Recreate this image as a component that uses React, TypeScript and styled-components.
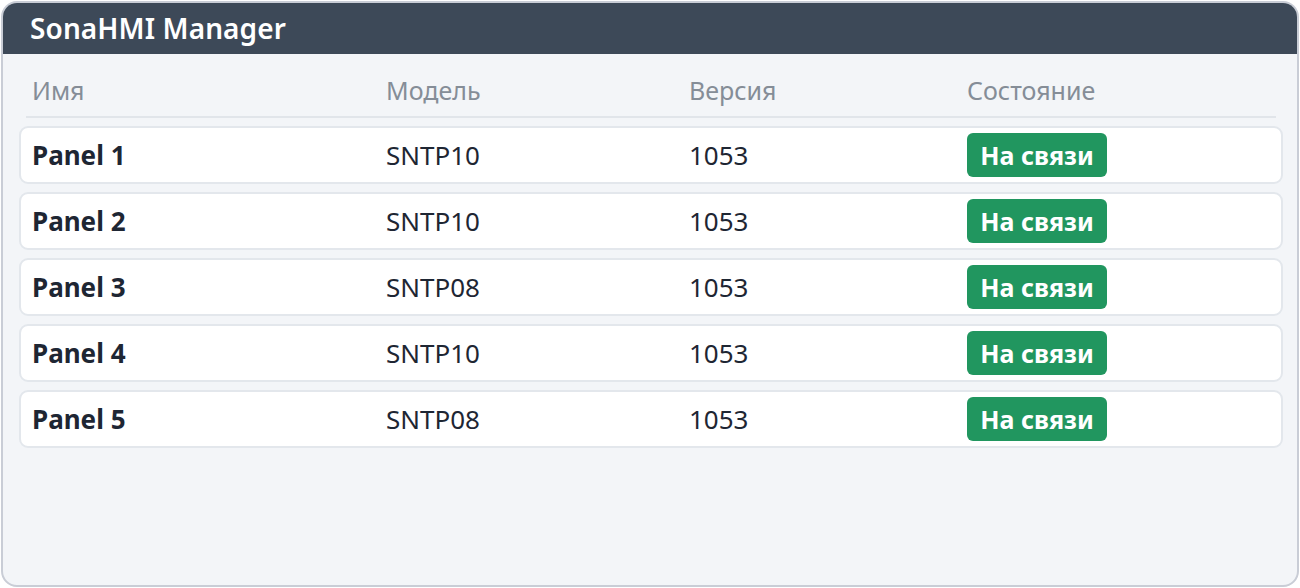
import styled, { createGlobalStyle } from 'styled-components';

const GlobalStyle = createGlobalStyle`
  html, body {
    margin: 0;
    padding: 0;
    background: #ffffff;
  }
  body {
    font-family: "Noto Sans", "Open Sans", sans-serif;
  }
`;

const Card = styled.div`
  box-sizing: border-box;
  width: 1298px;
  height: 586px;
  margin: 1px 0 0 1px;
  border: 2px solid #c9cdd6;
  border-radius: 16px;
  background: #f3f5f8;
  overflow: hidden;
  display: flex;
  flex-direction: column;
`;

const Header = styled.div`
  box-sizing: border-box;
  height: 51px;
  flex-shrink: 0;
  background: #3d4958;
  display: flex;
  align-items: center;
  padding: 0 0 2px 27px;
  color: #ffffff;
  font-size: 28px;
  font-weight: 600;
  letter-spacing: 0.1px;
`;

const Body = styled.div`
  display: flex;
  flex-direction: column;
  padding: 0 14px 0 16px;
`;

const Columns = styled.div`
  display: grid;
  grid-template-columns: 354px 303px 278px 1fr;
  align-items: center;
`;

const HeadRow = styled(Columns)`
  height: 64px;
  margin: 0 7px 8px 7px;
  padding: 10px 0 0 6px;
  border-bottom: 2px solid #e1e5ea;
  color: #858d97;
  font-size: 25px;
  box-sizing: border-box;
`;

const Row = styled(Columns)`
  height: 58px;
  margin-bottom: 8px;
  padding: 0 0 0 11px;
  background: #ffffff;
  border: 2px solid #e3e7ec;
  border-radius: 9px;
  box-sizing: border-box;
  color: #1e2633;
  font-size: 26px;
`;

const Name = styled.span`
  font-weight: 700;
`;

const Badge = styled.span<{ $bg: string }>`
  display: inline-flex;
  align-items: center;
  justify-content: center;
  width: 140px;
  height: 44px;
  border-radius: 6px;
  background: ${({ $bg }) => $bg};
  color: #ffffff;
  font-size: 25px;
  font-weight: 700;
  justify-self: start;
`;

const panels = [
  { name: 'Panel 1', model: 'SNTP10', version: '1053' },
  { name: 'Panel 2', model: 'SNTP10', version: '1053' },
  { name: 'Panel 3', model: 'SNTP08', version: '1053' },
  { name: 'Panel 4', model: 'SNTP10', version: '1053' },
  { name: 'Panel 5', model: 'SNTP08', version: '1053' },
];

export default function App() {
  return (
    <>
      <GlobalStyle />
      <Card>
        <Header>SonaHMI Manager</Header>
        <Body>
          <HeadRow>
            <span>Имя</span>
            <span>Модель</span>
            <span>Версия</span>
            <span>Состояние</span>
          </HeadRow>
          {panels.map((p) => (
            <Row key={p.name}>
              <Name>{p.name}</Name>
              <span>{p.model}</span>
              <span>{p.version}</span>
              <Badge $bg="#21965f">На связи</Badge>
            </Row>
          ))}
        </Body>
      </Card>
    </>
  );
}
